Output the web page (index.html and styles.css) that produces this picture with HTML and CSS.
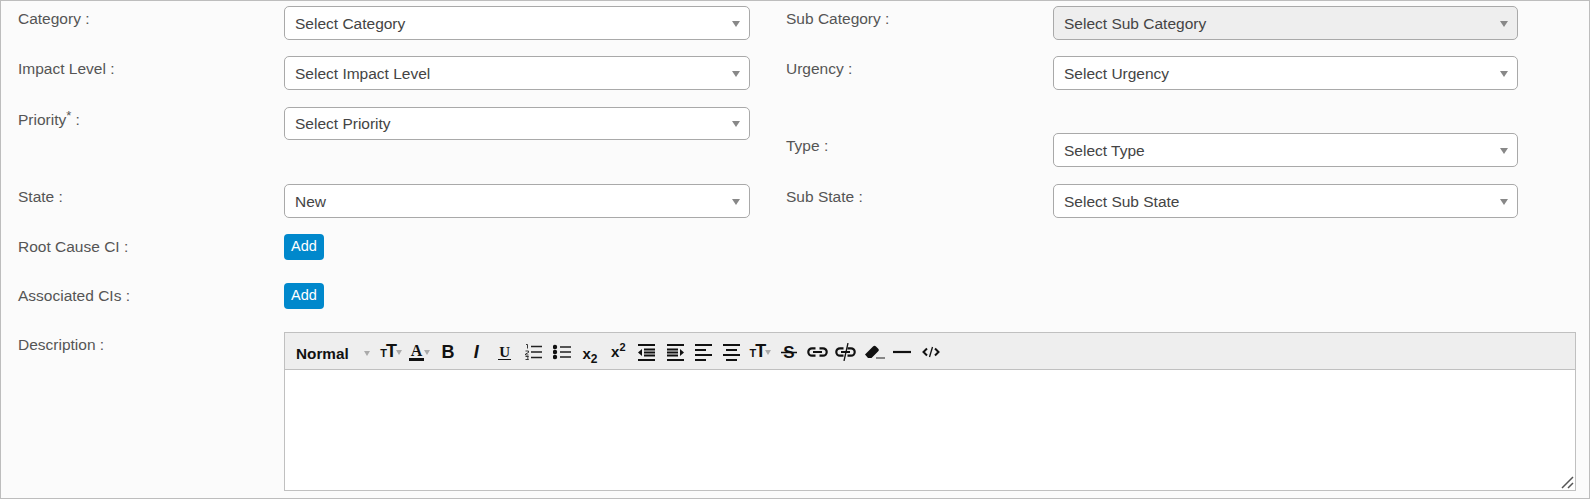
FILE: index.html
```html
<!DOCTYPE html>
<html lang="en">
<head>
<meta charset="utf-8">
<title>Form</title>
<link rel="stylesheet" href="styles.css">
</head>
<body>
<form class="panel">
  <div class="row row-a">
    <div class="cell"><label class="lab">Category :</label><div class="sel"><span>Select Category</span><i class="car"></i></div></div>
    <div class="cell cell-r"><label class="lab">Sub Category :</label><div class="sel off"><span>Select Sub Category</span><i class="car"></i></div></div>
  </div>
  <div class="row row-b">
    <div class="cell"><label class="lab">Impact Level :</label><div class="sel"><span>Select Impact Level</span><i class="car"></i></div></div>
    <div class="cell cell-r"><label class="lab">Urgency :</label><div class="sel"><span>Select Urgency</span><i class="car"></i></div></div>
  </div>
  <div class="row row-c">
    <div class="cell"><label class="lab">Priority<sup class="req">*</sup> :</label><div class="sel sel-short"><span>Select Priority</span><i class="car"></i></div></div>
    <div class="cell cell-r cell-type"><label class="lab">Type :</label><div class="sel"><span>Select Type</span><i class="car"></i></div></div>
  </div>
  <div class="row row-d">
    <div class="cell"><label class="lab">State :</label><div class="sel"><span>New</span><i class="car"></i></div></div>
    <div class="cell cell-r"><label class="lab">Sub State :</label><div class="sel"><span>Select Sub State</span><i class="car"></i></div></div>
  </div>
  <div class="row row-e"><div class="cell"><label class="lab">Root Cause CI :</label><button type="button" class="add">Add</button></div></div>
  <div class="row row-f"><div class="cell"><label class="lab">Associated CIs :</label><button type="button" class="add">Add</button></div></div>
  <div class="row row-g">
    <label class="lab">Description :</label>
    <div class="editor">
      <div class="bar">
        <span class="normal">Normal</span><i class="mini mini-n"></i>
        <span class="tool"><span class="tt"><small>T</small>T</span><i class="mini"></i></span>
        <span class="tool"><span class="aa">A</span><i class="mini"></i></span>
        <span class="tool"><b class="gb">B</b></span>
        <span class="tool"><b class="gi">I</b></span>
        <span class="tool"><span class="gu">U</span></span>
        <span class="tool"><svg width="17" height="18" viewBox="0 0 17 18"><path d="M6 3.500h11M6 9h11M6 14.500h11" stroke="#222" stroke-width="1.400"/><path d="M1 1.500h1.500v4M.5 8h3v1.500l-3 1.500v1h3M.5 13.500h3l-1 1.500 1 1.500h-3" stroke="#222" fill="none" stroke-width=".9"/></svg></span>
        <span class="tool"><svg width="18" height="16" viewBox="0 0 18 16"><path d="M7 3h11M7 8h11M7 13h11" stroke="#222" stroke-width="1.400"/><circle cx="2" cy="3" r="2.200" fill="#111"/><circle cx="2" cy="8" r="2.200" fill="#111"/><circle cx="2" cy="13" r="2.200" fill="#111"/></svg></span>
        <span class="tool"><b class="gs gs-dn">x<sub>2</sub></b></span>
        <span class="tool"><b class="gs gs-up">x<sup>2</sup></b></span>
        <span class="tool"><svg width="17" height="17" viewBox="0 0 17 17"><path d="M0 1h17M6 5.500h11M6 8.500h11M6 11.500h11M0 16h17" stroke="#111" stroke-width="2"/><path d="M4 5v7L0 8.500z" fill="#111"/></svg></span>
        <span class="tool"><svg width="17" height="17" viewBox="0 0 17 17"><path d="M0 1h17M0 5.500h11M0 8.500h11M0 11.500h11M0 16h17" stroke="#111" stroke-width="2"/><path d="M13 5v7l4-3.500z" fill="#111"/></svg></span>
        <span class="tool"><svg width="17" height="17" viewBox="0 0 17 17"><path d="M0 1h17M0 6h11M0 11h17M0 16h11" stroke="#111" stroke-width="2"/></svg></span>
        <span class="tool"><svg width="17" height="17" viewBox="0 0 17 17"><path d="M0 1h17M3 6h11M0 11h17M3 16h11" stroke="#111" stroke-width="2"/></svg></span>
        <span class="tool"><span class="tt"><small>T</small>T</span><i class="mini"></i></span>
        <span class="tool"><svg width="16" height="18" viewBox="0 0 16 18"><text class="gstrike" x="8" y="15" text-anchor="middle">S</text><path d="M0 9.500h16" stroke="#111" stroke-width="1.500"/></svg></span>
        <span class="tool"><svg width="21" height="10" viewBox="0 0 21 10"><path d="M8.500 1.300H5a3.700 3.700 0 0 0 0 7.400h3.500M12.500 1.300H16a3.700 3.700 0 0 1 0 7.400h-3.500M6 5h9" stroke="#111" stroke-width="2.200" fill="none"/></svg></span>
        <span class="tool"><svg width="21" height="18" viewBox="0 0 21 18"><path d="M8.500 5.300H5a3.700 3.700 0 0 0 0 7.400h3.500M12.500 5.300H16a3.700 3.700 0 0 1 0 7.400h-3.500M6 9h9" stroke="#111" stroke-width="2.200" fill="none"/><path d="M13 0L9 18" stroke="#111" stroke-width="1.300"/></svg></span>
        <span class="tool tool-er"><svg width="20" height="14" viewBox="0 0 20 14"><path d="M0 9.500L8 1.500a2 2 0 0 1 3 0l2 2a2 2 0 0 1 0 3L6.500 13H3z" fill="#111"/><path d="M11 13h9" stroke="#333" stroke-width="1.100"/></svg></span>
        <span class="tool"><svg width="18" height="4" viewBox="0 0 18 4"><path d="M0 2h18" stroke="#111" stroke-width="2.200"/></svg></span>
        <span class="tool"><svg width="18" height="12" viewBox="0 0 18 12"><path d="M5 2.500L1.500 6 5 9.500M13 2.500L16.500 6 13 9.500" stroke="#111" stroke-width="2" fill="none"/><path d="M10.500 1l-3 10" stroke="#111" stroke-width="1.300"/></svg></span>
      </div>
      <div class="area"><svg class="grip" width="13" height="13" viewBox="0 0 13 13"><path d="M1 12L12 1M7 12l5-5" stroke="#555" stroke-width="1.500"/></svg></div>
    </div>
  </div>
</form>
</body>
</html>
```

FILE: styles.css
```css
* { box-sizing: border-box; }
html, body { margin: 0; padding: 0; }
body { font-family: "Liberation Sans", Arial, sans-serif; font-size: 15.5px; color: #555; background: #fff; }
.panel { width: 1590px; height: 499px; background: #fbfbfb; border: 1px solid #bdbdbd; padding: 5px 13px 0 17px; overflow: hidden; }
.row { display: flex; }
.row-a { height: 50px; }
.row-b { height: 51px; }
.row-c { height: 77px; }
.row-d { height: 50px; }
.row-e, .row-f { height: 49px; }
.cell { display: flex; width: 768px; align-items: flex-start; }
.cell-r { width: 733px; }
.cell-r .lab { width: 267px; }
.cell-r .sel { width: 465px; }
.cell-type { padding-top: 26px; }
.lab { width: 266px; flex: none; padding-top: 5px; line-height: 16px; color: #555; font-size: 15.500px; }
.req { font-size: 13px; line-height: 0; vertical-align: 5px; }
.sel { width: 466px; height: 34px; flex: none; display: flex; align-items: center; justify-content: space-between; background: #fff; border: 1px solid #a9a9a9; border-radius: 5px; padding: 1px 9px 0 10px; font-size: 15.500px; color: #444; }
.sel-short { height: 33px; }
.off { background: #eee; }
.car { width: 0; height: 0; border-left: 4px solid transparent; border-right: 4px solid transparent; border-top: 6px solid #888; }
.add { width: 40px; height: 26px; background: #0088cc; border: 0; border-radius: 4px; color: #fff; font: 14.500px "Liberation Sans", Arial, sans-serif; padding: 0 0 2px; }
.editor { width: 1292px; height: 159px; flex: none; border: 1px solid #c0c0c0; display: flex; flex-direction: column; background: #fff; }
.bar { height: 37px; flex: none; background: #eee; border-bottom: 1px solid #c0c0c0; display: flex; align-items: center; padding: 2px 0 0 11px; color: #111; }
.normal { font-weight: 700; font-size: 15.300px; width: 68px; color: #111; padding-top: 4px; }
.mini { display: inline-block; flex: none; width: 0; height: 0; border-left: 3px solid transparent; border-right: 3px solid transparent; border-top: 5px solid #aaa; }
.mini-n { margin-left: 0; margin-right: 7px; margin-top: 3px; }
.tool { width: 28.400px; height: 24px; flex: none; display: flex; align-items: center; justify-content: center; color: #111; }
.tool-er { padding-left: 3px; }
.tt { font-weight: 700; font-size: 18px; line-height: 20px; letter-spacing: -1px; color: #111; }
.tt small { font-size: 11px; }
.aa { font-family: "Liberation Serif", serif; font-weight: 700; font-size: 16px; line-height: 15px; border-bottom: 3px solid #111; padding: 0 2px; }
.gb { font-size: 18px; font-weight: 700; }
.gi { font-size: 18px; font-style: italic; font-weight: 700; }
.gu { font-size: 15px; line-height: 14px; font-family: "Liberation Serif", serif; border-bottom: 1px solid #111; padding: 0 1px; font-weight: 700; }
.gs { font-size: 15px; }
.gs sub { font-size: 12px; line-height: 0; }
.gs sup { font-size: 11px; line-height: 0; }
.gs-up { margin-top: -2px; }
.gs-dn { margin-top: 2px; }
.gstrike { font: 700 17px "Liberation Sans", Arial, sans-serif; fill: #111; }
.area { flex: 1; position: relative; background: #fff; }
.grip { position: absolute; right: 1px; bottom: 1px; }
```
